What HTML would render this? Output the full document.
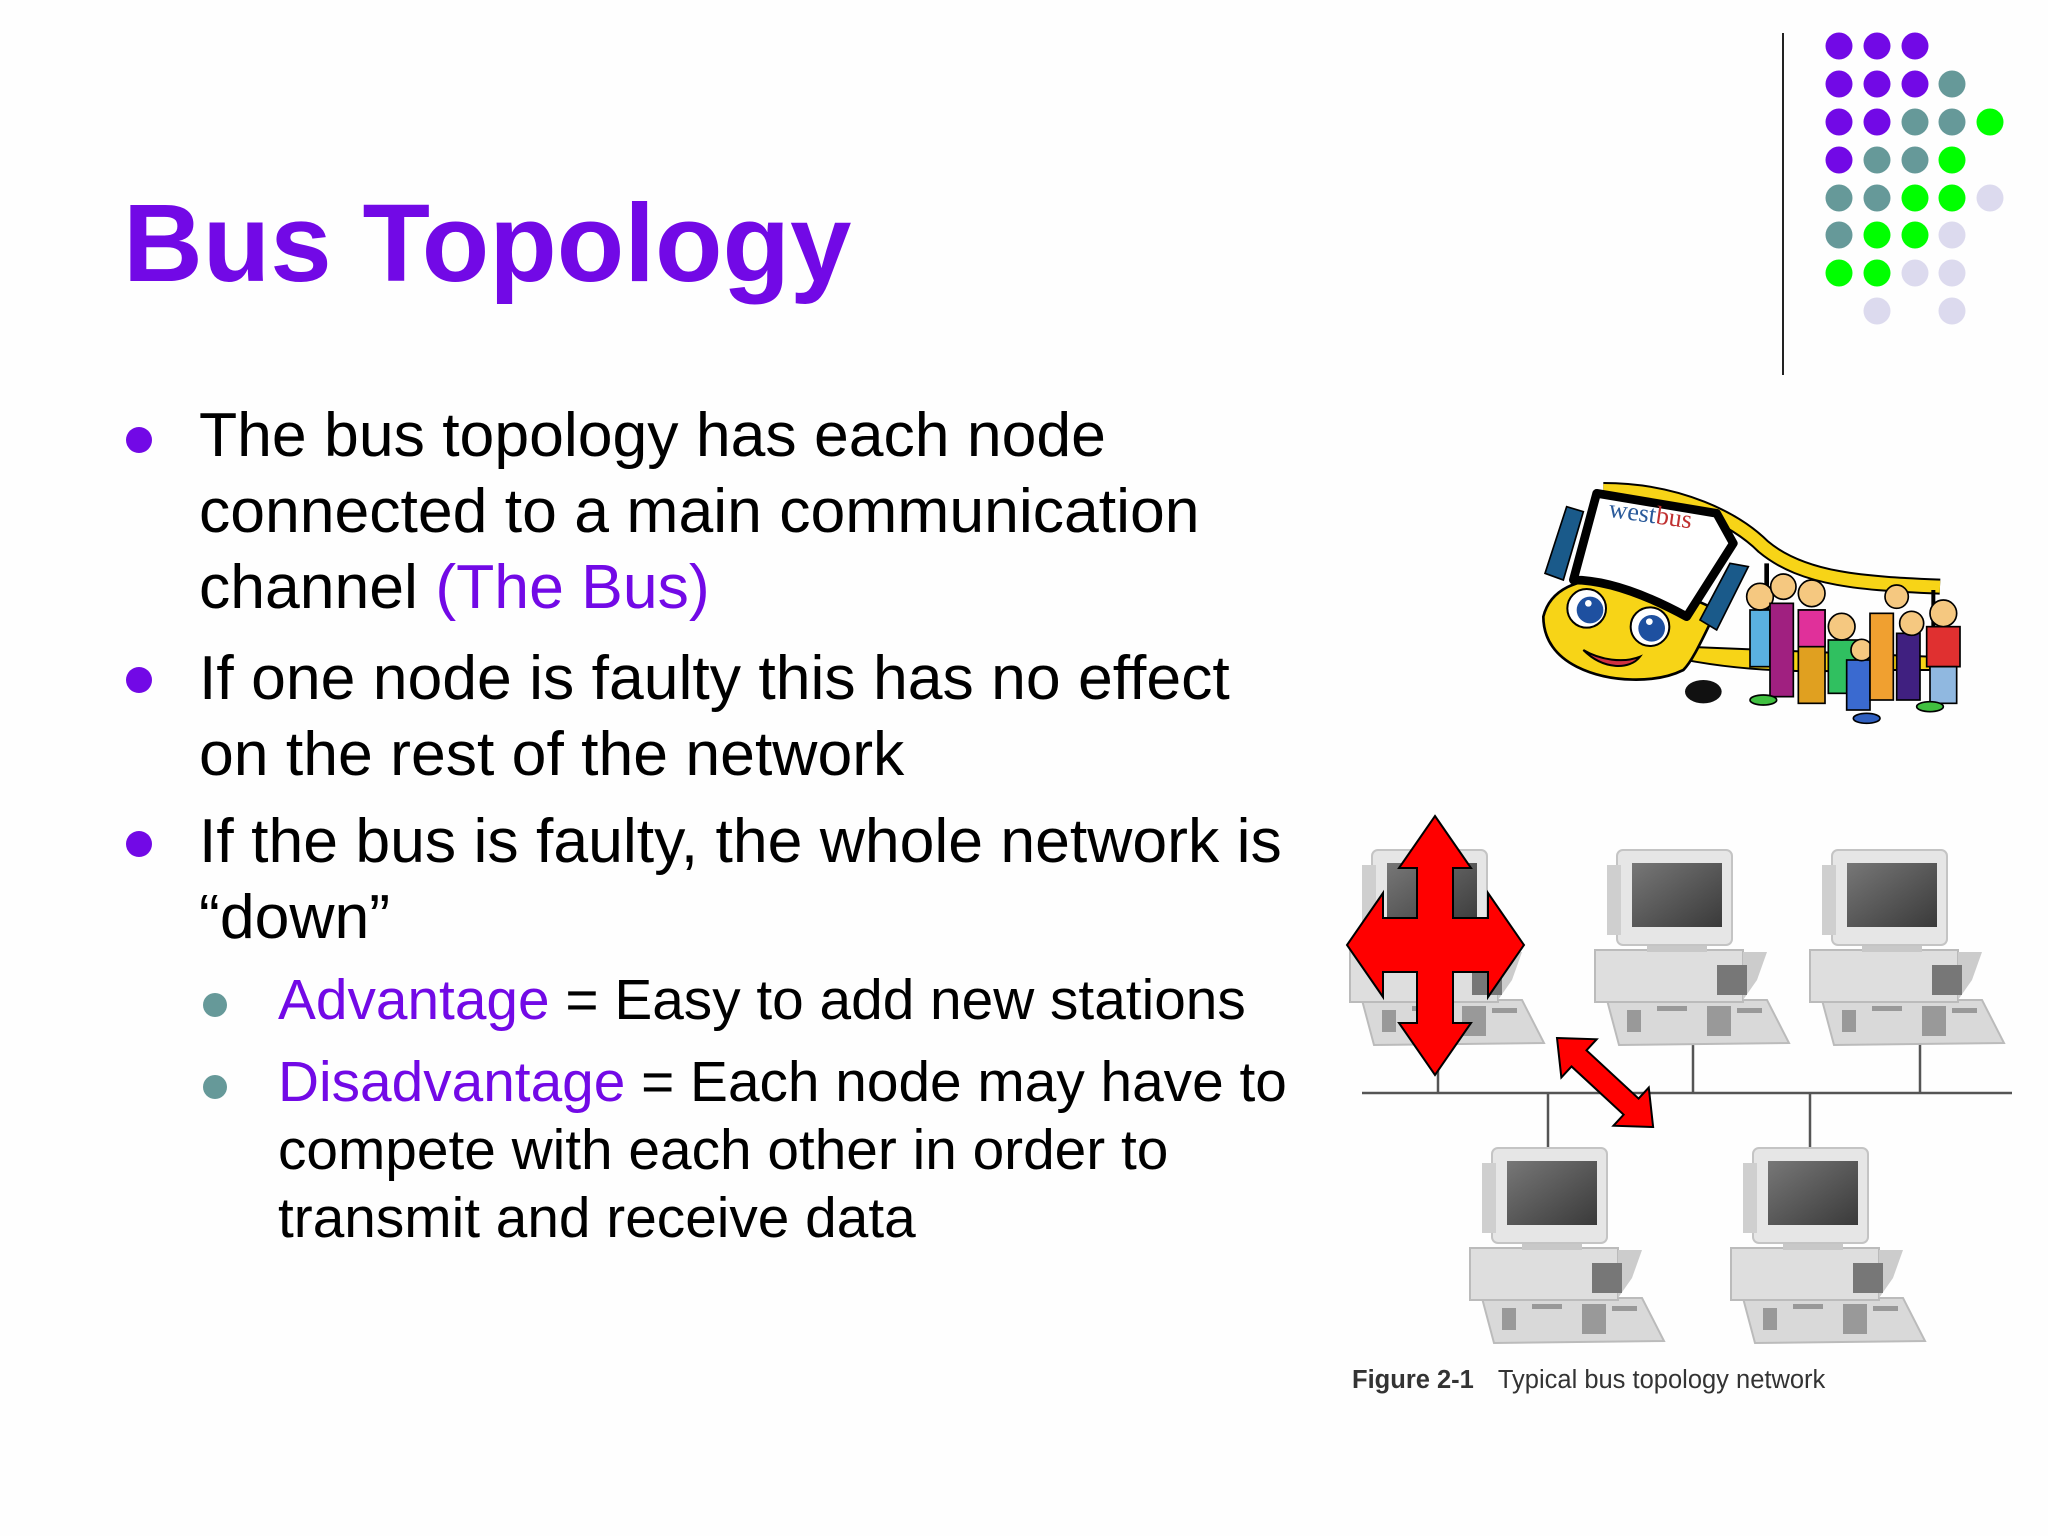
<!DOCTYPE html>
<html><head><meta charset="utf-8"><style>
body{margin:0;width:2048px;height:1536px;background:#fefefe;position:relative;overflow:hidden;font-family:"Liberation Sans",Arial,sans-serif;}
.t{position:absolute;white-space:nowrap;}
.m{font-size:62.5px;line-height:76px;color:#000;left:199px;}
.s{font-size:56.8px;line-height:68px;color:#000;left:278px;}
.p{color:#7209e6;}
.dot{position:absolute;border-radius:50%;}
</style></head><body>
<div class="t" style="left:123px;top:189px;font-size:110.5px;line-height:110px;font-weight:bold;color:#7209e6;">Bus Topology</div>
<div style="position:absolute;left:1782px;top:33px;width:2px;height:342px;background:#222"></div>

<div class="dot" style="left:126px;top:427px;width:26px;height:26px;background:#7209e6"></div>
<div class="dot" style="left:126px;top:667px;width:26px;height:26px;background:#7209e6"></div>
<div class="dot" style="left:126px;top:831px;width:26px;height:26px;background:#7209e6"></div>

<div class="t m" style="top:397px">The bus topology has each node<br>connected to a main communication<br>channel <span class="p">(The Bus)</span></div>
<div class="t m" style="top:640px">If one node is faulty this has no effect<br>on the rest of the network</div>
<div class="t m" style="top:803px">If the bus is faulty, the whole network is<br>“down”</div>

<div class="dot" style="left:203px;top:993px;width:24px;height:24px;background:#669999"></div>
<div class="dot" style="left:203px;top:1075px;width:24px;height:24px;background:#669999"></div>
<div class="t s" style="top:967px"><span class="p">Advantage</span> = Easy to add new stations</div>
<div class="t s" style="top:1049px;line-height:68px"><span class="p">Disadvantage</span> = Each node may have to<br>compete with each other in order to<br>transmit and receive data</div>

<svg style="position:absolute;left:0;top:0" width="2048" height="1536" viewBox="0 0 2048 1536">
<g>
<circle cx="1839" cy="46" r="13.5" fill="#7209e6"/><circle cx="1877" cy="46" r="13.5" fill="#7209e6"/><circle cx="1915" cy="46" r="13.5" fill="#7209e6"/>
<circle cx="1839" cy="84" r="13.5" fill="#7209e6"/><circle cx="1877" cy="84" r="13.5" fill="#7209e6"/><circle cx="1915" cy="84" r="13.5" fill="#7209e6"/><circle cx="1952" cy="84" r="13.5" fill="#669999"/>
<circle cx="1839" cy="122" r="13.5" fill="#7209e6"/><circle cx="1877" cy="122" r="13.5" fill="#7209e6"/><circle cx="1915" cy="122" r="13.5" fill="#669999"/><circle cx="1952" cy="122" r="13.5" fill="#669999"/><circle cx="1990" cy="122" r="13.5" fill="#00ff00"/>
<circle cx="1839" cy="160" r="13.5" fill="#7209e6"/><circle cx="1877" cy="160" r="13.5" fill="#669999"/><circle cx="1915" cy="160" r="13.5" fill="#669999"/><circle cx="1952" cy="160" r="13.5" fill="#00ff00"/>
<circle cx="1839" cy="198" r="13.5" fill="#669999"/><circle cx="1877" cy="198" r="13.5" fill="#669999"/><circle cx="1915" cy="198" r="13.5" fill="#00ff00"/><circle cx="1952" cy="198" r="13.5" fill="#00ff00"/><circle cx="1990" cy="198" r="13.5" fill="#dcdaee"/>
<circle cx="1839" cy="235" r="13.5" fill="#669999"/><circle cx="1877" cy="235" r="13.5" fill="#00ff00"/><circle cx="1915" cy="235" r="13.5" fill="#00ff00"/><circle cx="1952" cy="235" r="13.5" fill="#dcdaee"/>
<circle cx="1839" cy="273" r="13.5" fill="#00ff00"/><circle cx="1877" cy="273" r="13.5" fill="#00ff00"/><circle cx="1915" cy="273" r="13.5" fill="#dcdaee"/><circle cx="1952" cy="273" r="13.5" fill="#dcdaee"/>
<circle cx="1877" cy="311" r="13.5" fill="#dcdaee"/><circle cx="1952" cy="311" r="13.5" fill="#dcdaee"/>
</g>
<defs>
<linearGradient id="scr" x1="0" y1="0" x2="1" y2="1"><stop offset="0" stop-color="#777"/><stop offset="1" stop-color="#3a3a3a"/></linearGradient>
<g id="pc">
<polygon points="-10,150 150,150 172,193 2,195" fill="#d9d9d9" stroke="#bbb" stroke-width="2"/>
<g fill="#999"><rect x="10" y="160" width="14" height="22"/><rect x="40" y="156" width="30" height="5"/><rect x="90" y="156" width="24" height="30"/><rect x="120" y="158" width="25" height="5"/></g>
<rect x="-22" y="100" width="148" height="52" fill="#dedede" stroke="#bbb" stroke-width="2"/>
<polygon points="126,102 150,102 140,130 126,150" fill="#ccc"/>
<rect x="100" y="115" width="30" height="30" fill="#777"/>
<rect x="30" y="92" width="60" height="10" fill="#c8c8c8"/>
<rect x="0" y="0" width="115" height="95" rx="6" fill="#e6e6e6" stroke="#c4c4c4" stroke-width="2"/>
<rect x="-10" y="15" width="14" height="70" fill="#cfcfcf"/>
<rect x="15" y="13" width="90" height="64" fill="url(#scr)"/>
</g>
</defs>
<g stroke="#555" stroke-width="2.5">
<line x1="1362" y1="1093" x2="2012" y2="1093"/>
<line x1="1438" y1="1070" x2="1438" y2="1093"/>
<line x1="1693" y1="1040" x2="1693" y2="1093"/>
<line x1="1920" y1="1040" x2="1920" y2="1093"/>
<line x1="1548" y1="1093" x2="1548" y2="1150"/>
<line x1="1810" y1="1093" x2="1810" y2="1150"/>
</g>
<use href="#pc" x="1372" y="850"/>
<use href="#pc" x="1617" y="850"/>
<use href="#pc" x="1832" y="850"/>
<use href="#pc" x="1492" y="1148"/>
<use href="#pc" x="1753" y="1148"/>
<polygon fill="#ff0000" stroke="#000" stroke-width="2" points="1435,816 1471,868 1453,868 1453,918 1488,918 1488,893 1524,945 1488,997 1488,972 1453,972 1453,1023 1471,1023 1435,1075 1399,1023 1417,1023 1417,972 1383,972 1383,997 1347,945 1383,893 1383,918 1417,918 1417,868 1399,868"/>
<g transform="translate(1557,1038) rotate(42.8)">
<polygon fill="#ff0000" stroke="#000" stroke-width="2" points="0,0 30,-26 30,-11 101,-11 101,-26 131,0 101,26 101,11 30,11 30,26"/>
</g>
<text x="1352" y="1388" font-family="'Liberation Sans',sans-serif" font-size="25.5" fill="#333"><tspan font-weight="bold">Figure 2-1</tspan><tspan dx="24">Typical bus topology network</tspan></text>
</svg>

<svg style="position:absolute;left:1530px;top:470px" width="450" height="270" viewBox="0 0 1350 810">
<ellipse cx="520" cy="665" rx="55" ry="35" fill="#111"/>
<path d="M420,560 C600,600 800,610 1000,600 L1200,600 L1200,560 L460,530 Z" fill="#f7d417" stroke="#000" stroke-width="6"/>
<path d="M220,60 C450,60 620,150 700,230 C820,330 1000,340 1230,350" fill="none" stroke="#000" stroke-width="48"/>
<path d="M220,60 C450,60 620,150 700,230 C820,330 1000,340 1230,350" fill="none" stroke="#f7d417" stroke-width="36"/>
<line x1="710" y1="280" x2="710" y2="560" stroke="#000" stroke-width="14"/>
<line x1="1210" y1="360" x2="1210" y2="560" stroke="#000" stroke-width="12"/>
<path d="M40,440 C60,360 140,320 260,330 C380,340 480,380 560,420 C520,500 490,570 460,600 C380,640 240,640 140,590 C80,560 40,510 40,440 Z" fill="#f7d417" stroke="#000" stroke-width="8"/>
<path d="M200,70 L560,130 L610,220 L470,440 C360,380 240,330 130,330 Z" fill="#fff" stroke="#000" stroke-width="26" stroke-linejoin="round"/>
<text x="235" y="160" font-family="'Liberation Serif',serif" font-size="78" fill="#2a5a9a" transform="rotate(8 375 140)">west<tspan fill="#c03030">bus</tspan></text>
<polygon points="110,110 160,125 100,330 45,310" fill="#1a5a8a" stroke="#000" stroke-width="5"/>
<polygon points="600,280 655,290 560,480 510,450" fill="#1a5a8a" stroke="#000" stroke-width="5"/>
<circle cx="170" cy="415" r="58" fill="#fff" stroke="#000" stroke-width="6"/>
<circle cx="180" cy="420" r="40" fill="#1e50a0"/><circle cx="175" cy="400" r="10" fill="#fff"/>
<circle cx="360" cy="470" r="58" fill="#fff" stroke="#000" stroke-width="6"/>
<circle cx="365" cy="475" r="40" fill="#1e50a0"/><circle cx="358" cy="455" r="10" fill="#fff"/>
<path d="M160,540 C220,600 300,600 330,560 C280,580 210,570 160,540 Z" fill="#d03040" stroke="#000" stroke-width="6"/>
<g stroke="#000" stroke-width="5">
<rect x="660" y="420" width="60" height="170" fill="#5ab0e0"/>
<circle cx="690" cy="380" r="40" fill="#f5c880"/>
<rect x="720" y="400" width="70" height="280" fill="#a02080"/>
<circle cx="760" cy="350" r="38" fill="#f5c880"/>
<rect x="805" y="420" width="80" height="280" fill="#e0a020"/>
<rect x="805" y="420" width="80" height="110" fill="#e0309a"/>
<circle cx="845" cy="370" r="40" fill="#f5c880"/>
<rect x="895" y="510" width="90" height="160" fill="#30c060"/>
<circle cx="935" cy="470" r="40" fill="#f5c880"/>
<rect x="950" y="570" width="70" height="150" fill="#3a6ad0"/>
<circle cx="995" cy="540" r="32" fill="#f5c880"/>
<rect x="1020" y="430" width="70" height="260" fill="#f0a030"/>
<circle cx="1100" cy="380" r="35" fill="#f5c880"/>
<rect x="1100" y="490" width="70" height="200" fill="#402080"/>
<circle cx="1145" cy="460" r="36" fill="#f5c880"/>
<rect x="1190" y="470" width="100" height="120" fill="#e03030"/>
<rect x="1200" y="590" width="80" height="110" fill="#90b8e0"/>
<circle cx="1240" cy="430" r="40" fill="#f5c880"/>
<ellipse cx="700" cy="690" rx="40" ry="15" fill="#40c040"/>
<ellipse cx="1200" cy="710" rx="40" ry="15" fill="#40c040"/>
<ellipse cx="1010" cy="745" rx="40" ry="15" fill="#3060c0"/>
</g>
</svg>
</body></html>
